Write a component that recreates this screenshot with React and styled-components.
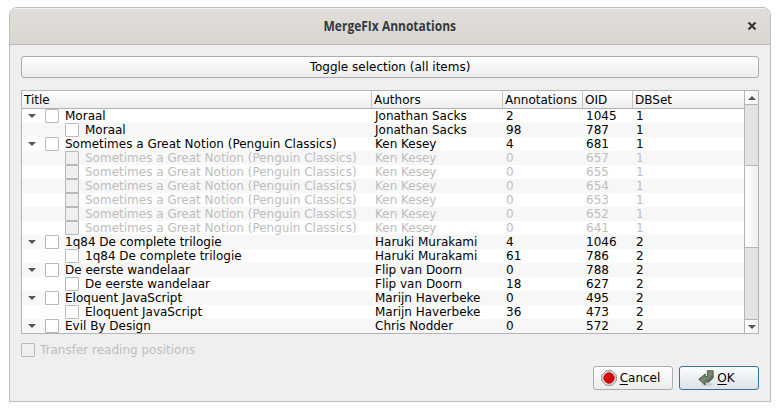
import React from "react";
import styled, { createGlobalStyle, css } from "styled-components";

const GlobalStyle = createGlobalStyle`
  *, *::before, *::after { box-sizing: border-box; }
  body {
    margin: 0;
    background: #fff;
    color: #000;
    font: 12px/14px "DejaVu Sans", sans-serif;
  }
`;

const Page = styled.div`
  height: 411px;
  padding: 7px 9px 9px;
  overflow: hidden;
`;

const Dialog = styled.section`
  display: flex;
  flex-direction: column;
  width: 762px;
  height: 395px;
  background: #efefef;
  border: 1px solid #bfbfbf;
  border-radius: 8px 8px 0 0;
  overflow: hidden;
`;

const TitleBar = styled.header`
  display: grid;
  grid-template-columns: 36px 1fr 36px;
  align-items: center;
  height: 37px;
  flex: none;
  background: linear-gradient(#e1dedb, #dad6d1);
  border-bottom: 1px solid #bdb8b0;
  box-shadow: inset 0 1px #f3f2f1;
`;

const WindowTitle = styled.h1`
  grid-column: 2;
  justify-self: center;
  margin: 0 0 2px;
  color: #343a3e;
  font: bold 15px/20px "Open Sans", sans-serif;
  white-space: nowrap;
  transform: scaleX(0.8);
`;

const CloseButton = styled.button`
  display: flex;
  justify-content: center;
  padding: 0;
  border: 0;
  background: none;
`;

const Content = styled.div`
  display: flex;
  flex-direction: column;
  padding: 11px;
`;

const Button = styled.button`
  display: flex;
  align-items: center;
  justify-content: center;
  height: ${(p) => p.$height}px;
  width: ${(p) => p.$width};
  padding: 0;
  color: #000;
  font: inherit;
  border: 1px solid #adadad;
  border-radius: 3px;
  background: linear-gradient(#fff, #ececec);
  ${(p) =>
    p.$primary &&
    css`
      border-color: #2f74a3;
      background: linear-gradient(#fcfdfd, #dce3e9);
    `}
  svg { flex: none; margin-right: 3px; }
`;

const ActionButton = styled(Button)`
  padding-right: 5px;
`;

const TreeFrame = styled.div`
  display: flex;
  height: 244px;
  margin-top: 12px;
  border: 1px solid #b4b4b4;
  background: #fff;
`;

const Tree = styled.div`
  flex: 1;
  min-width: 0;
`;

const columns = css`
  display: grid;
  grid-template-columns: 350px 131px 80px 50px 1fr;
`;

const HeaderRow = styled.div`
  ${columns}
  height: 18px;
  background: linear-gradient(#fff, #eee);
  border-bottom: 1px solid #b0b0b0;
`;

const HeaderCell = styled.div`
  padding: 2px 0 0 2px;
  border-right: 1px solid #c4c4c4;
  white-space: nowrap;
  &:last-child { border-right: 0; }
`;

const Row = styled.div`
  ${columns}
  height: 14px;
  color: ${(p) => (p.$disabled ? "#bebebe" : "#000")};
  &:nth-child(even) { background: #f7f7f7; }
`;

const Cell = styled.div`
  padding-left: 3px;
  white-space: nowrap;
`;

const TitleCell = styled.div`
  display: flex;
  padding-left: ${(p) => (p.$child ? 43 : 6)}px;
  white-space: nowrap;
`;

const Expander = styled.svg`
  width: 8px;
  height: 14px;
  margin-right: 9px;
  flex: none;
`;

const CheckBox = styled.span`
  width: 14px;
  height: 14px;
  flex: none;
  margin-right: ${(p) => p.$gap || 6}px;
  border: 1px solid #b9b9b9;
  border-radius: 1px;
  background: ${(p) => (p.$disabled ? "#efefef" : "#fff")};
`;

const ScrollBar = styled.div`
  display: flex;
  flex-direction: column;
  width: 14px;
  border-left: 1px solid #b4b4b4;
  background: #e3e3e3;
`;

const ScrollButton = styled.button`
  display: flex;
  align-items: center;
  justify-content: center;
  width: 13px;
  height: 14px;
  padding: 0;
  border: 0 solid #b4b4b4;
  border-width: ${(p) => (p.$down ? "1px 0 0" : "0 0 1px")};
  background: linear-gradient(90deg, #fff, #f2f2f2);
`;

const Track = styled.div`
  flex: 1;
  padding-top: 60px;
`;

const Thumb = styled.div`
  height: 83px;
  border: solid #b4b4b4;
  border-width: 1px 0;
  background: linear-gradient(90deg, #fff, #efefef);
`;

const Option = styled.label`
  display: flex;
  height: 14px;
  margin-top: 9px;
  color: #bebebe;
`;

const Actions = styled.footer`
  display: flex;
  justify-content: flex-end;
  gap: 6px;
  margin-top: 9px;
`;

const Mnemonic = styled.span`
  text-decoration: underline;
  text-underline-offset: 2px;
  text-decoration-thickness: 1px;
`;

const StopIcon = () => (
  <svg width="16" height="16" viewBox="0 0 16 16">
    <defs>
      <linearGradient id="stop" x2="1" y2="1">
        <stop stopColor="#ef1515" />
        <stop offset="1" stopColor="#b80000" />
      </linearGradient>
    </defs>
    <path d="M5 .8h6L15.2 5v6L11 15.2H5L.8 11V5z" fill="#eeeeec" stroke="#7f817c" />
    <circle cx="8" cy="8" r="5.4" fill="url(#stop)" stroke="#b00" strokeWidth=".6" />
  </svg>
);

const ReturnIcon = () => (
  <svg width="16" height="16" viewBox="0 0 16 16">
    <defs>
      <linearGradient id="return" x2="1" y2="1">
        <stop stopColor="#526148" />
        <stop offset=".5" stopColor="#7b8b6d" />
        <stop offset="1" stopColor="#414e38" />
      </linearGradient>
    </defs>
    <ellipse cx="9" cy="14.4" rx="6" ry="1.5" fill="#000" opacity=".12" />
    <path
      d="M9.3.7h5.9v7.1L11 12.1H7.2v2.7L.7 9.3 7.2 3.9v2.6h2.1z"
      fill="url(#return)"
      stroke="#414c39"
      strokeWidth=".8"
      strokeLinejoin="round"
    />
  </svg>
);

const Arrow = ({ up }) => (
  <svg width="8" height="4" viewBox="0 0 8 4">
    <path d={up ? "M0 4 4 0l4 4z" : "M0 0h8L4 4z"} fill="#555" />
  </svg>
);

const notion = "Sometimes a Great Notion (Penguin Classics)";

const books = [
  { title: "Moraal", author: "Jonathan Sacks", count: 2, oid: 1045, set: 1 },
  { title: "Moraal", author: "Jonathan Sacks", count: 98, oid: 787, set: 1, child: true },
  { title: notion, author: "Ken Kesey", count: 4, oid: 681, set: 1 },
  ...[657, 655, 654, 653, 652, 641].map((oid) => ({
    title: notion, author: "Ken Kesey", count: 0, oid, set: 1, child: true, disabled: true,
  })),
  { title: "1q84 De complete trilogie", author: "Haruki Murakami", count: 4, oid: 1046, set: 2 },
  { title: "1q84 De complete trilogie", author: "Haruki Murakami", count: 61, oid: 786, set: 2, child: true },
  { title: "De eerste wandelaar", author: "Flip van Doorn", count: 0, oid: 788, set: 2 },
  { title: "De eerste wandelaar", author: "Flip van Doorn", count: 18, oid: 627, set: 2, child: true },
  { title: "Eloquent JavaScript", author: "Marijn Haverbeke", count: 0, oid: 495, set: 2 },
  { title: "Eloquent JavaScript", author: "Marijn Haverbeke", count: 36, oid: 473, set: 2, child: true },
  { title: "Evil By Design", author: "Chris Nodder", count: 0, oid: 572, set: 2 },
];

const BookRow = ({ book }) => (
  <Row $disabled={book.disabled}>
    <TitleCell $child={book.child}>
      {!book.child && (
        <Expander viewBox="0 0 8 14">
          <path d="M0 5h8L4 9z" fill="#555" />
        </Expander>
      )}
      <CheckBox $disabled={book.disabled} />
      {book.title}
    </TitleCell>
    <Cell>{book.author}</Cell>
    <Cell>{book.count}</Cell>
    <Cell>{book.oid}</Cell>
    <Cell>{book.set}</Cell>
  </Row>
);

export default function App() {
  return (
    <Page>
      <GlobalStyle />
      <Dialog>
        <TitleBar>
          <WindowTitle>MergeFIx Annotations</WindowTitle>
          <CloseButton aria-label="Close">
            <svg width="10" height="10" viewBox="0 0 10 10">
              <path d="m1.7 2.2 6.6 6.6m0-6.6L1.7 8.8" stroke="#fff" strokeWidth="2.2" />
              <path d="m1.5 1.5 7 7m0-7-7 7" stroke="#2e3436" strokeWidth="2.2" />
            </svg>
          </CloseButton>
        </TitleBar>
        <Content>
          <Button $height={22} $width="100%">Toggle selection (all items)</Button>
          <TreeFrame>
            <Tree>
              <HeaderRow>
                {["Title", "Authors", "Annotations", "OID", "DBSet"].map((name) => (
                  <HeaderCell key={name}>{name}</HeaderCell>
                ))}
              </HeaderRow>
              <div>
                {books.map((book) => <BookRow key={book.oid} book={book} />)}
              </div>
            </Tree>
            <ScrollBar>
              <ScrollButton aria-label="Scroll up"><Arrow up /></ScrollButton>
              <Track><Thumb /></Track>
              <ScrollButton $down aria-label="Scroll down"><Arrow /></ScrollButton>
            </ScrollBar>
          </TreeFrame>
          <Option><CheckBox $disabled $gap={5} />Transfer reading positions</Option>
          <Actions>
            <ActionButton $height={24} $width="80px"><StopIcon /><span><Mnemonic>C</Mnemonic>ancel</span></ActionButton>
            <ActionButton $height={24} $width="80px" $primary><ReturnIcon /><span><Mnemonic>O</Mnemonic>K</span></ActionButton>
          </Actions>
        </Content>
      </Dialog>
    </Page>
  );
}
